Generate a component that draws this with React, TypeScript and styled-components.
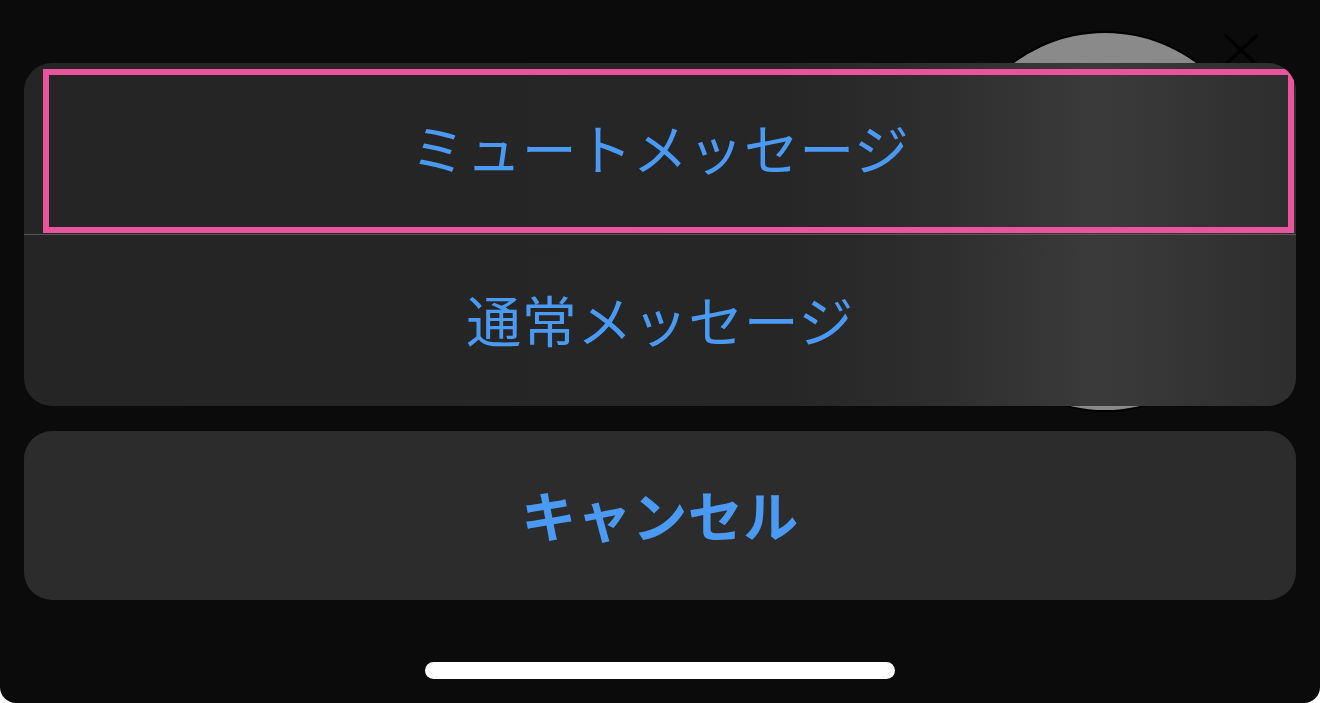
import styled, { createGlobalStyle } from 'styled-components';

const GlobalStyle = createGlobalStyle`
  html, body {
    margin: 0;
    padding: 0;
    background: #ffffff;
  }
  body {
    font-family: "Noto Sans CJK JP", "Noto Sans", sans-serif;
  }
`;

export default function App() {
  return (
    <>
      <GlobalStyle />
      <Screen>
        <Avatar />
        <CloseMark viewBox="0 0 36 32">
          <path d="M3 2 L33 30 M33 2 L3 30" />
        </CloseMark>

        <Sheet>
          <ActionGroup>
            <ActionRow>
              <ActionLabel>ミュートメッセージ</ActionLabel>
              <Highlight />
            </ActionRow>
            <Separator />
            <ActionRow>
              <ActionLabel>通常メッセージ</ActionLabel>
            </ActionRow>
          </ActionGroup>

          <CancelButton>
            <ActionLabel $bold>キャンセル</ActionLabel>
          </CancelButton>
        </Sheet>

        <HomeIndicator />
      </Screen>
    </>
  );
}

const Screen = styled.div`
  position: relative;
  width: 1320px;
  height: 703px;
  box-sizing: border-box;
  background: #0b0b0b;
  border-radius: 0 0 16px 16px;
  overflow: hidden;
  display: flex;
  flex-direction: column;
  align-items: center;
  padding-top: 63px;
`;

const Avatar = styled.div`
  position: absolute;
  left: 935px;
  top: 31px;
  width: 340px;
  height: 381px;
  box-sizing: border-box;
  border-radius: 50%;
  background: #8a8a8a;
  border: 2px solid #000;
`;

const CloseMark = styled.svg`
  position: absolute;
  left: 1223px;
  top: 34px;
  width: 36px;
  height: 32px;
  fill: none;
  stroke: #000;
  stroke-width: 3.5;
  stroke-linecap: round;
`;

const Sheet = styled.div`
  position: relative;
  width: 1272px;
  display: flex;
  flex-direction: column;
  gap: 25px;
`;

const ActionGroup = styled.div`
  border-radius: 28px;
  overflow: hidden;
  background: linear-gradient(
    90deg,
    #252525 0%,
    #262626 60%,
    #2e2e2e 72%,
    #3a3a3a 84%,
    #383838 88%,
    #303030 96%,
    #2e2e2e 100%
  );
  display: flex;
  flex-direction: column;
`;

const ActionRow = styled.div`
  position: relative;
  height: 171px;
  display: flex;
  align-items: center;
  justify-content: center;
`;

const Separator = styled.div`
  height: 1px;
  background: #575757;
`;

const Highlight = styled.div`
  position: absolute;
  left: 19px;
  top: 6px;
  width: 1251px;
  height: 164px;
  box-sizing: border-box;
  border: 6px solid #e8559c;
`;

const ActionLabel = styled.span<{ $bold?: boolean }>`
  font-family: "Noto Sans CJK JP", "Noto Sans", sans-serif;
  font-size: 55px;
  line-height: 1;
  font-weight: ${p => (p.$bold ? 700 : 400)};
  color: #4a9af4;
  letter-spacing: 0.5px;
  margin-bottom: 4px;
`;

const CancelButton = styled.div`
  height: 169px;
  border-radius: 28px;
  background: #2c2c2d;
  display: flex;
  align-items: center;
  justify-content: center;
`;

const HomeIndicator = styled.div`
  margin-top: 62px;
  width: 470px;
  height: 17px;
  border-radius: 9px;
  background: #ffffff;
`;
